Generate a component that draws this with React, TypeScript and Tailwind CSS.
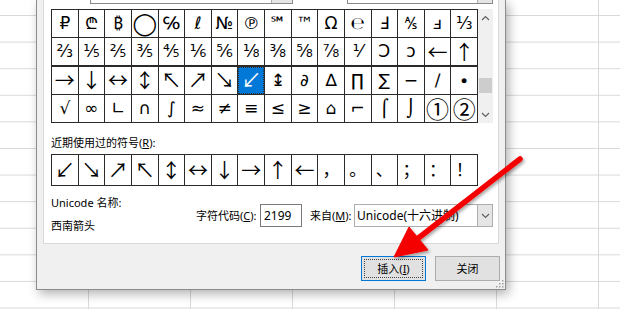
import React from 'react';

const symbols: string[][] = [
  ['₽', '₾', '₿', '◯', '℅', 'ℓ', '№', '℗', '℠', '™', 'Ω', '℮', 'Ⅎ', '⅍', 'ⅎ', '⅓'],
  ['⅔', '⅕', '⅖', '⅗', '⅘', '⅙', '⅚', '⅛', '⅜', '⅝', '⅞', '⅟', 'Ↄ', 'ↄ', '←', '↑'],
  ['→', '↓', '↔', '↕', '↖', '↗', '↘', '↙', '↨', '∂', '∆', '∏', '∑', '−', '∕', '∙'],
  ['√', '∞', '∟', '∩', '∫', '≈', '≠', '≡', '≤', '≥', '⌂', '⌐', '⌠', '⌡', '①', '②'],
];

const recent = ['↙', '↘', '↗', '↖', '↕', '↔', '↓', '→', '↑', '←', '，', '。', '、', '；', '：', '！'];

const ui = "font-['Noto_Sans','Noto_Sans_CJK_SC',sans-serif] text-[11px] leading-[16px] text-black";
const glyph = "font-['DejaVu_Sans','Noto_Sans','Noto_Sans_CJK_SC',sans-serif] text-[17px]";
const arrow = "font-['Noto_Sans_CJK_SC','DejaVu_Sans',sans-serif] text-[20px]";
const circled = "font-['Noto_Sans_CJK_SC','DejaVu_Sans',sans-serif] text-[23px]";
const big = "font-['DejaVu_Sans',sans-serif] text-[22px]";

const styleFor = (s: string) => {
  if ('←↑→↓↔↕↖↗↘↙'.includes(s)) return arrow;
  if ('①②'.includes(s)) return circled;
  if (s === '◯') return big;
  return glyph;
};

const Chevron: React.FC<{ down?: boolean }> = ({ down }) => (
  <svg width="9" height="6" viewBox="0 0 9 6">
    <polyline
      points={down ? '1,1 4.5,4.5 8,1' : '1,5 4.5,1.5 8,5'}
      fill="none"
      stroke="#606060"
      strokeWidth="1.2"
    />
  </svg>
);

export default function App() {
  return (
    <div className="relative w-[620px] h-[309px] overflow-hidden bg-white bg-[linear-gradient(to_right,#d9d9d9_1px,transparent_1px),linear-gradient(to_bottom,#d9d9d9_1px,transparent_1px)] bg-[length:102px_26.6px] bg-[position:88px_15px]">
      {/* Symbol dialog */}
      <div className="absolute left-[36px] top-0 w-[470px] h-[290px] bg-[#f0f0f0] border-x border-b border-[#8c8c8c] shadow-[3px_4px_10px_rgba(0,0,0,0.3)] flex flex-col">
        <div className="mx-[6px] h-[244px] bg-white border-x border-b border-[#d9d9d9] pl-[7px] flex flex-col">
          {/* font / subset combos, cut off above */}
          <div className="flex h-[4px]">
            <div className="ml-[39px] w-[203px] border-x border-b border-[#8a8a8a] bg-white flex justify-end">
              <div className="w-[21px] bg-[#e5e5e5] border-l border-[#adadad]" />
            </div>
            <div className="ml-[54px] w-[146px] border-x border-b border-[#8a8a8a] bg-white flex justify-end">
              <div className="w-[15px] bg-[#e5e5e5] border-l border-[#adadad]" />
            </div>
          </div>

          {/* symbol grid */}
          <div className="mt-[5px] flex">
            <div className="w-[427px] grid grid-cols-16 gap-px bg-[#2a2a2a] border border-[#2a2a2a]">
              {symbols.flat().map((s, i) => {
                const sel = i === 39;
                return (
                  <div
                    key={i}
                    className={`h-[27px] leading-none flex items-center justify-center ${styleFor(s)} ${
                      sel ? 'bg-[#0078d7] text-white outline-1 outline-dotted outline-[#333] -outline-offset-1' : 'bg-white text-black'
                    }`}
                  >
                    {s}
                  </div>
                );
              })}
            </div>
            <div className="w-[15px] h-[114px] bg-[#f0f0f0] flex flex-col">
              <div className="h-[17px] flex items-center justify-center">
                <Chevron />
              </div>
              <div className="flex-1">
                <div className="mt-[52px] h-[15px] mx-px bg-[#cdcdcd]" />
              </div>
              <div className="h-[17px] flex items-center justify-center">
                <Chevron down />
              </div>
            </div>
          </div>

          <div className={`${ui} mt-[12px]`}>
            近期使用过的符号(<span className="underline">R</span>):
          </div>

          {/* recently used */}
          <div className="mt-[3px] w-[427px] grid grid-cols-16 gap-px bg-[#2a2a2a] border border-[#2a2a2a]">
            {recent.map((s, i) => (
              <div key={i} className={`h-[30px] leading-none bg-white flex items-center justify-center ${styleFor(s)}`}>
                {s}
              </div>
            ))}
          </div>

          {/* name and code */}
          <div className="mt-[9px] flex">
            <div className={`${ui} w-[145px] flex flex-col gap-[7px]`}>
              <div>Unicode 名称:</div>
              <div>西南箭头</div>
            </div>
            <div className="mt-[9px] flex items-center h-[23px]">
              <div className={`${ui} w-[64px]`}>
                字符代码(<span className="underline">C</span>):
              </div>
              <div className={`${ui} w-[42px] h-[23px] border border-[#7a7a7a] bg-white pl-[3px] flex items-center text-[12px]`}>
                2199
              </div>
              <div className={`${ui} ml-[8px] w-[44px]`}>
                来自(<span className="underline">M</span>):
              </div>
              <div className="w-[139px] h-[23px] border border-[#adadad] bg-white flex items-center">
                <div className={`${ui} flex-1 pl-[2px] text-[12px]`}>Unicode(十六进制)</div>
                <div className="w-[15px] h-full bg-[#e5e5e5] border-l border-[#adadad] flex items-center justify-center">
                  <Chevron down />
                </div>
              </div>
            </div>
          </div>
        </div>

        {/* buttons */}
        <div className="mt-[12px] flex justify-end gap-[9px] pr-[5px]">
          <button className={`${ui} w-[65px] h-[25px] bg-[#e1e1e1] border border-[#0078d7] flex items-center justify-center p-[2px]`}>
            <span className="w-full h-full border border-dotted border-[#444] flex items-center justify-center">
              插入(<span className="underline">I</span>)
            </span>
          </button>
          <button className={`${ui} w-[65px] h-[25px] bg-[#e1e1e1] border border-[#adadad] flex items-center justify-center`}>
            关闭
          </button>
        </div>

        {/* resize grip */}
        <svg className="absolute right-[1px] bottom-[1px]" width="10" height="10" viewBox="0 0 10 10">
          {[
            [8, 2], [8, 5], [8, 8], [5, 5], [5, 8], [2, 8],
          ].map(([x, y], i) => (
            <rect key={i} x={x} y={y} width="1.5" height="1.5" fill="#a0a0a0" />
          ))}
        </svg>
      </div>

      {/* red annotation arrow */}
      <svg className="absolute inset-0 pointer-events-none" width="620" height="309" viewBox="0 0 620 309">
        <defs>
          <filter id="sh" x="-20%" y="-20%" width="140%" height="140%">
            <feDropShadow dx="1.5" dy="2" stdDeviation="1.5" floodColor="#000" floodOpacity="0.35" />
          </filter>
        </defs>
        <g filter="url(#sh)">
          <line x1="520" y1="159" x2="412" y2="243" stroke="#f40000" strokeWidth="5.5" strokeLinecap="round" />
          <polygon points="394,257 409,227 428,250" fill="#f40000" stroke="#f40000" strokeWidth="1" strokeLinejoin="round" />
        </g>
      </svg>
    </div>
  );
}
